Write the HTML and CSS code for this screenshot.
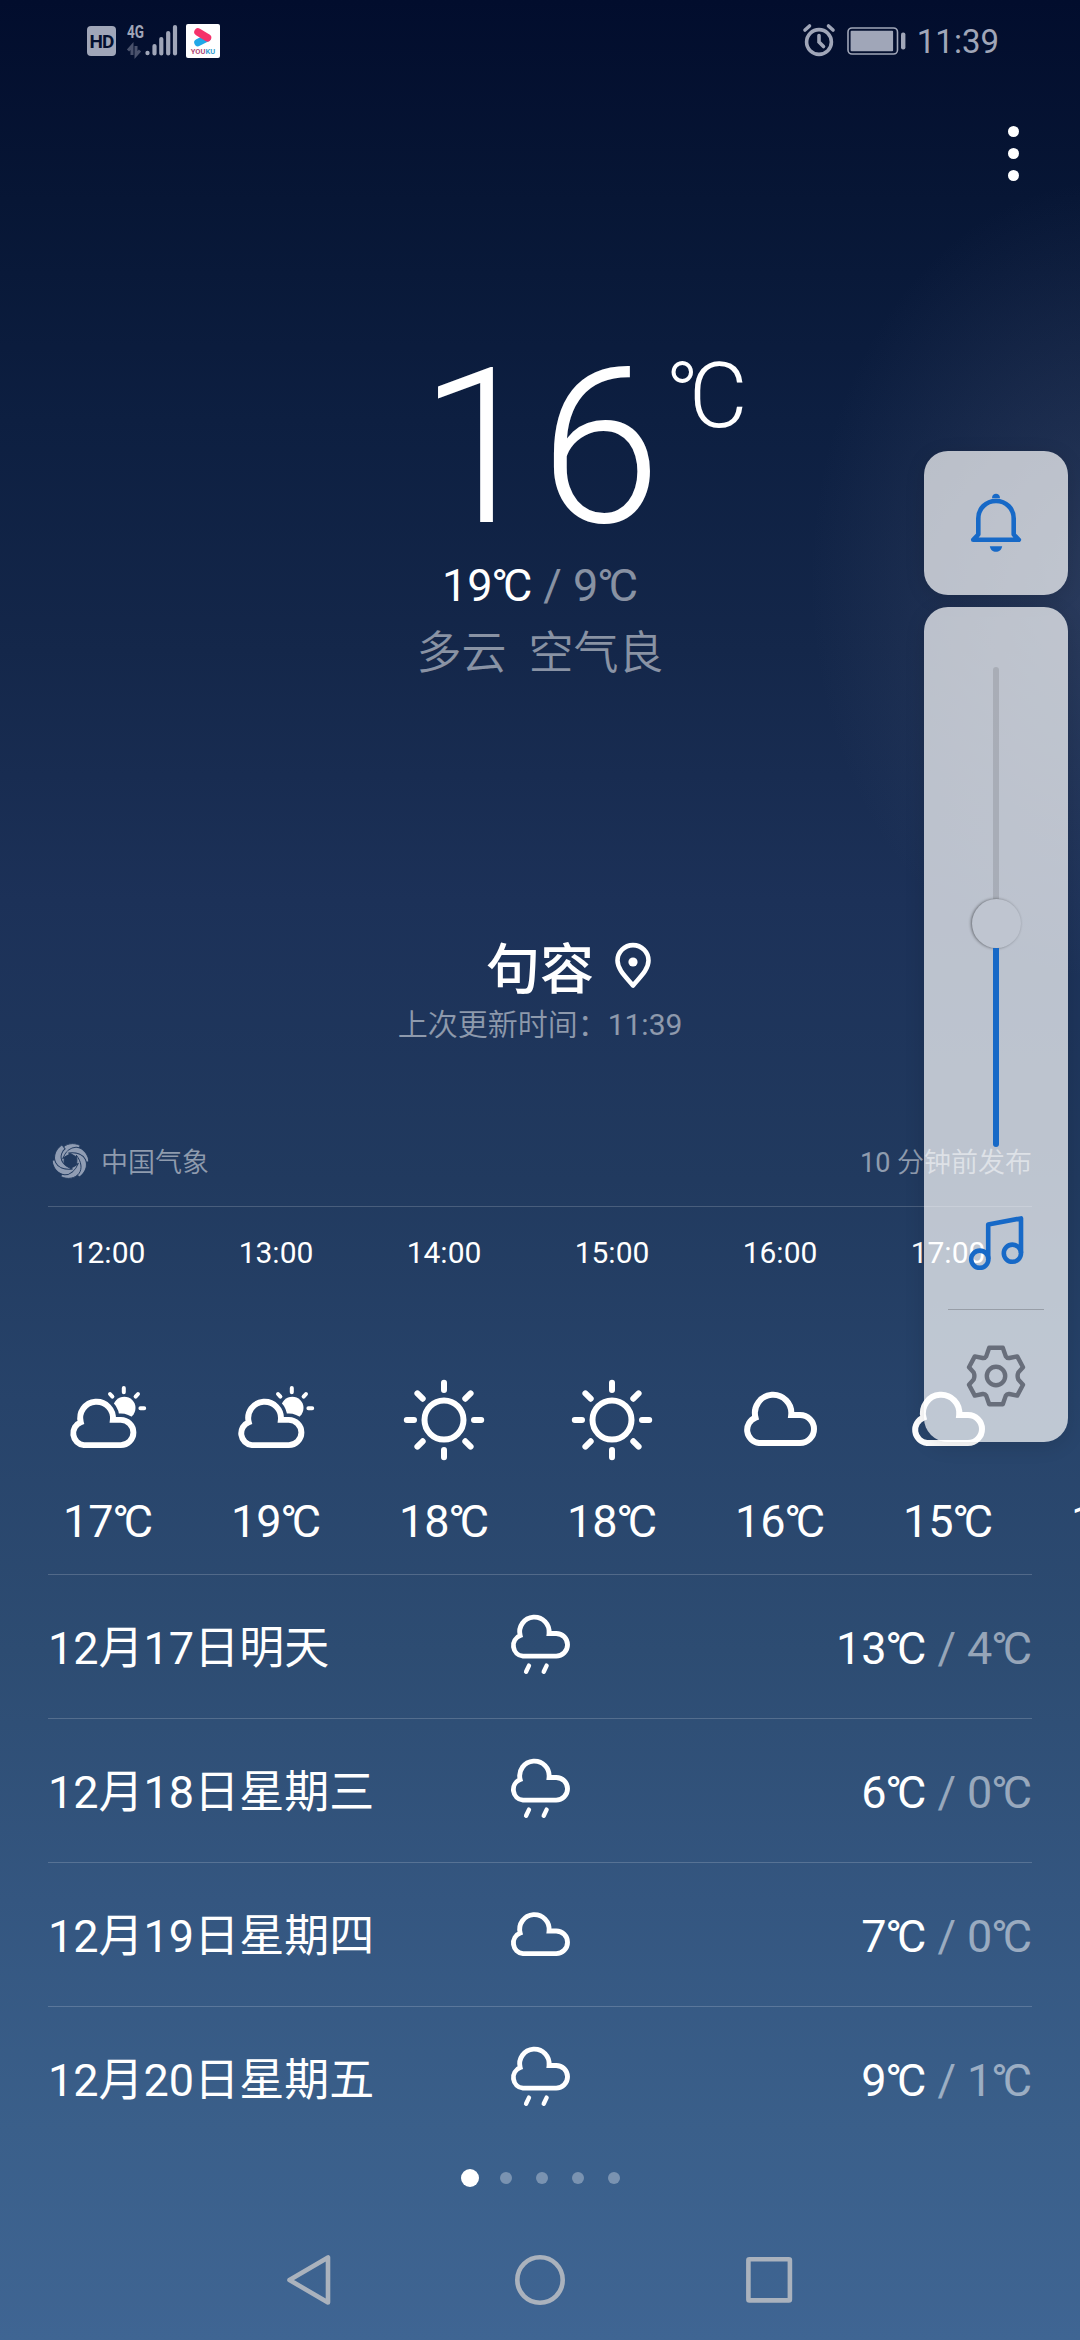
FILE: index.html
```html
<!DOCTYPE html>
<html lang="zh-CN">
<head>
<meta charset="utf-8">
<title>天气</title>
<link rel="stylesheet" href="styles.css">
</head>
<body>
<svg class="defs" aria-hidden="true">
  <defs>
    <path id="cloud-shape" d="M21 65H62A14 14 0 0 0 62 37H53.2A18.2 18.2 0 1 0 17.5 39.6A13.2 13.2 0 0 0 21 65Z"/>
    <mask id="sun-cut" maskUnits="userSpaceOnUse" x="0" y="0" width="84" height="84">
      <rect width="84" height="84" fill="#fff"/>
      <use href="#cloud-shape" transform="translate(-1 8.6) scale(.9)" fill="#000" stroke="#000" stroke-width="14"/>
    </mask>
    <symbol id="i-cloud" viewBox="0 0 84 84">
      <use href="#cloud-shape" stroke-width="6"/>
    </symbol>
    <symbol id="i-rain" viewBox="0 0 84 84">
      <use href="#cloud-shape" transform="translate(0 -11.7)" stroke-width="6"/>
      <path d="M28.4 65L24.8 72.6M50.2 65L46.6 72.6" stroke-width="5.4"/>
    </symbol>
    <symbol id="i-sun" viewBox="0 0 84 84">
      <circle cx="42" cy="42" r="19.5" stroke-width="6"/>
      <path d="M42 4.8V12M42 72V79.2M4.8 42H12M72 42H79.2M15.4 15.4L20.7 20.7M63.3 63.3L68.6 68.6M68.6 15.4L63.3 20.7M20.7 63.3L15.4 68.6" stroke-width="6"/>
    </symbol>
    <symbol id="i-partly" viewBox="0 0 84 84">
      <use href="#cloud-shape" transform="translate(-1 8.6) scale(.9)" stroke-width="6.6"/>
      <circle cx="58.3" cy="30" r="11.2" fill="#fff" stroke="none" mask="url(#sun-cut)"/>
      <path d="M57.8 10V14.2M74.4 30.3H78.2M44 16L46.4 18.6M72 16L69.6 18.6" stroke-width="4"/>
    </symbol>
  </defs>
</svg>

<div class="screen">
  <header class="status">
    <div class="status-left">
      <span class="hd">HD</span>
      <svg class="signal" width="50" height="32" viewBox="0 0 50 32">
        <text x="0" y="13.6" class="net" textLength="17" lengthAdjust="spacingAndGlyphs">4G</text>
        <path class="updown" d="M5 31V22L1 26.5M9 22v9l4-4.5"/>
        <path class="bars" d="M20.5 28.8v.4M27.5 22v7.5M34.3 15v14.5M41.2 9v20.5M48 3v26.5"/>
      </svg>
      <span class="youku">
        <svg width="18" height="19" viewBox="0 0 18 19">
          <path d="M4 14.5L13 10" stroke="#1fa8e8" stroke-width="7.5" stroke-linecap="round"/>
          <path d="M4 4L13.5 9.8" stroke="#f5326b" stroke-width="7.5" stroke-linecap="round"/>
        </svg>
        <span class="youku-name"><i>YOU</i>KU</span>
      </span>
    </div>
    <div class="status-right">
      <svg width="32" height="33" viewBox="0 0 32 33" class="line-icon alarm">
        <circle cx="16" cy="18" r="12.4"/>
        <path d="M16 11.5V18L20.5 22.5M2 6L6.5 2M30 6L25.5 2"/>
      </svg>
      <svg width="59" height="28" viewBox="0 0 59 28" class="battery">
        <rect x="1" y="1" width="49.5" height="26" rx="4" fill="none" stroke="#a0a6b8" stroke-width="1.6"/>
        <rect x="3.6" y="3.8" width="42.5" height="20.4" rx="1"/>
        <rect x="54" y="5.5" width="4.4" height="17" rx="2"/>
      </svg>
      <span class="clock">11:39</span>
    </div>
  </header>

  <div class="toolbar">
    <span class="more"><i></i><i></i><i></i></span>
  </div>

  <section class="current">
    <div class="centered big"><span class="temp">16</span><span class="unit"><b>°</b>C</span></div>
    <div class="range">19<b>°</b>C<span class="dim"> / 9<b>°</b>C</span></div>
    <div class="condition">多云&nbsp; 空气良</div>
  </section>

  <section class="place">
    <div class="centered city"><span class="name">句容</span>
      <svg class="pin" width="38" height="48" viewBox="0 0 38 48">
        <path d="M19 43.5C13 36 3.5 28 3.5 18.6A15.5 15.5 0 0 1 34.5 18.6C34.5 28 25 36 19 43.5Z" fill="none" stroke="#fff" stroke-width="4.6" stroke-linejoin="round"/>
        <circle cx="19" cy="20" r="4.6" fill="#fff"/>
      </svg>
    </div>
    <div class="updated">上次更新时间：<span class="digits">11:39</span></div>
  </section>

  <div class="source">
    <svg width="35" height="36" viewBox="-18 -18 36 36" class="swirl">
      <defs><path id="blade" d="M10 -16C3 -19.5 -5 -18 -9 -12.5C-12 -8 -11.5 -1 -6 6C-8 -3 -5 -10.5 2 -11.6C4.5 -12 7 -11.6 8 -11Z"/></defs>
      <use href="#blade"/>
      <use href="#blade" transform="rotate(60)"/>
      <use href="#blade" transform="rotate(120)"/>
      <use href="#blade" transform="rotate(180)"/>
      <use href="#blade" transform="rotate(240)"/>
      <use href="#blade" transform="rotate(300)"/>
    </svg>
    <span class="provider">中国气象</span>
    <span class="published"><span class="digits">10</span> 分钟前发布</span>
  </div>

  <section class="hourly">
    <div class="hour"><span class="time">12:00</span><svg class="wx"><use href="#i-partly"/></svg><span class="deg">17<b>°</b>C</span></div>
    <div class="hour"><span class="time">13:00</span><svg class="wx"><use href="#i-partly"/></svg><span class="deg">19<b>°</b>C</span></div>
    <div class="hour"><span class="time">14:00</span><svg class="wx"><use href="#i-sun"/></svg><span class="deg">18<b>°</b>C</span></div>
    <div class="hour"><span class="time">15:00</span><svg class="wx"><use href="#i-sun"/></svg><span class="deg">18<b>°</b>C</span></div>
    <div class="hour"><span class="time">16:00</span><svg class="wx"><use href="#i-cloud"/></svg><span class="deg">16<b>°</b>C</span></div>
    <div class="hour"><span class="time">17:00</span><svg class="wx"><use href="#i-cloud"/></svg><span class="deg">15<b>°</b>C</span></div>
    <div class="hour"><svg class="wx no-time"><use href="#i-cloud"/></svg><span class="deg">14<b>°</b>C</span></div>
  </section>

  <section class="daily">
    <div class="day"><span>12月17日明天</span><svg class="wx small"><use href="#i-rain"/></svg><span class="span">13<b>°</b>C<span class="dim"> / 4<b>°</b>C</span></span></div>
    <div class="day"><span>12月18日星期三</span><svg class="wx small"><use href="#i-rain"/></svg><span class="span">6<b>°</b>C<span class="dim"> / 0<b>°</b>C</span></span></div>
    <div class="day"><span>12月19日星期四</span><svg class="wx small"><use href="#i-cloud"/></svg><span class="span">7<b>°</b>C<span class="dim"> / 0<b>°</b>C</span></span></div>
    <div class="day"><span>12月20日星期五</span><svg class="wx small"><use href="#i-rain"/></svg><span class="span">9<b>°</b>C<span class="dim"> / 1<b>°</b>C</span></span></div>
  </section>

  <div class="pager"><i class="on"></i><i></i><i></i><i></i><i></i></div>

  <nav class="nav">
    <svg width="56" height="56" viewBox="0 0 56 56"><path d="M45 5.5V50.5L6.5 28Z"/></svg>
    <svg width="56" height="56" viewBox="0 0 56 56"><circle cx="28" cy="28" r="22.7"/></svg>
    <svg width="56" height="56" viewBox="0 0 56 56"><rect x="7.4" y="7.2" width="41.5" height="41.2" rx="1"/></svg>
  </nav>

  <aside class="volume">
    <div class="card ringer">
      <svg width="52" height="60" viewBox="0 0 52 60" class="blue">
        <path d="M8.3 41.5V25.5C8.3 15.5 16 8 26 8S43.7 15.5 43.7 25.5V41.5L48.8 46.8H3.2Z"/>
        <path d="M22 5.2C22 2 24 .8 26 .8S30 2 30 5.2ZM19.8 53.2H32.2C31.5 57 29 58.8 26 58.8S20.5 57 19.8 53.2Z" class="solid"/>
      </svg>
    </div>
    <div class="card levels">
      <div class="slider"><span class="rest"></span><span class="knob"></span><span class="fill"></span></div>
      <svg width="54" height="54" viewBox="0 0 54 54" class="blue note">
        <circle cx="10.8" cy="43.2" r="8.6"/><circle cx="43.4" cy="37.2" r="8.6"/>
        <path d="M19.2 43V8.4L52 2.4V37"/>
      </svg>
      <div class="settings">
        <svg width="60" height="62" viewBox="-30 -31 60 62" class="gear">
          <path d="M-6.8 -28.2H6.8L9.8 -19.6Q11 -17.6 13.4 -18L21.2 -19.6L27 -8.8L22.4 -3.6Q20.8 0 22.4 3.6L27 8.8L21.2 19.6L13.4 18Q11 17.6 9.8 19.6L6.8 28.2H-6.8L-9.8 19.6Q-11 17.6 -13.4 18L-21.2 19.6L-27 8.8L-22.4 3.6Q-20.8 0 -22.4 -3.6L-27 -8.8L-21.2 -19.6L-13.4 -18Q-11 -17.6 -9.8 -19.6Z"/>
          <circle r="9.2"/>
        </svg>
      </div>
    </div>
  </aside>
</div>
</body>
</html>
```

FILE: styles.css
```css
* { box-sizing: border-box; }

body {
  margin: 0;
  color: #fff;
  font-family: Roboto, "Noto Sans CJK SC", sans-serif;
}

i { font-style: normal; }
svg { display: block; flex: none; overflow: visible; }
.defs { position: absolute; width: 0; height: 0; }

.screen {
  position: relative;
  display: flex;
  flex-direction: column;
  width: 1080px;
  height: 2340px;
  overflow: hidden;
  background:
    radial-gradient(ellipse 300px 400px at 1110px 580px, rgba(110, 120, 150, .27), rgba(110, 120, 150, 0)),
    linear-gradient(180deg, #020d2d 0, #071635 200px, #0d1f41 420px, #14274a 650px, #1c3158 900px, #213a5f 1180px, #27436a 1400px, #2d4c72 1650px, #345680 1900px, #3a5f8a 2130px, #3f6593 2340px);
}

.dim { color: rgba(255, 255, 255, .5); }

/* Degree sign tucked against the C */
b { margin-left: -.03em; font-weight: inherit; letter-spacing: -.115em; }

/* Status bar */
.status {
  display: flex;
  justify-content: space-between;
  height: 83px;
  padding: 24px 81px 0 87px;
  color: #a0a6b8;
}
.status-left, .status-right { display: flex; align-items: flex-start; }
.hd {
  width: 29px;
  height: 30px;
  margin: 2px 11px 0 0;
  border-radius: 4px;
  background: #a0a6b8;
  color: #04102f;
  font: 700 19px/31px Roboto, sans-serif;
  letter-spacing: -1px;
  text-align: center;
}
.net { fill: #a0a6b8; font: 700 18px Roboto, sans-serif; }
.updown { fill: none; stroke: #4a526c; stroke-width: 3; }
.bars { fill: none; stroke: #a0a6b8; stroke-width: 4.2; stroke-linecap: round; }
.youku {
  display: flex;
  flex-direction: column;
  align-items: center;
  width: 34px;
  height: 34px;
  margin-left: 9px;
  padding-top: 4px;
  border-radius: 2px;
  background: #fff;
}
.youku-name { color: #3a9fd0; font: 700 7.5px/9px Roboto, sans-serif; }
.youku-name i { color: #b04a78; }
.line-icon { fill: none; stroke: #a0a6b8; stroke-width: 3.6; stroke-linecap: round; }
.battery { margin: 3px 0 0 12px; fill: #a0a6b8; }
.clock { margin-left: 11px; font-size: 33px; line-height: 36px; }

.toolbar { display: flex; justify-content: flex-end; align-items: center; height: 140px; padding-right: 61px; }
.more { display: flex; flex-direction: column; gap: 11px; }
.more i { width: 11px; height: 11px; border-radius: 50%; background: #fff; }

/* Current conditions */
.current, .updated { text-align: center; }
.current { padding-top: 115px; }
.centered { display: grid; grid-template-columns: 1fr auto 1fr; }
.centered > :first-child { grid-column: 2; }
.big { height: 220px; font-weight: 300; }
.temp { font-size: 218px; line-height: 220px; }
.unit { justify-self: start; margin-left: 7px; font-size: 90px; line-height: 117px; }
.range { font-size: 45px; line-height: 55px; }
.condition { margin-top: 11px; color: rgba(255, 255, 255, .5); font-size: 45px; font-weight: 350; line-height: 60px; white-space: pre; }

.place { margin-top: 257px; }
.city { height: 60px; }
.name { font-size: 54px; font-weight: 500; line-height: 60px; }
.pin { margin: 1px 0 0 20px; }
.updated { color: rgba(255, 255, 255, .5); font-size: 30px; font-weight: 350; line-height: 48px; }
.digits { font-weight: 400; }

.source {
  display: flex;
  align-items: center;
  height: 89px;
  margin: 69px 48px 0;
  padding-bottom: 3px;
  border-bottom: 1px solid rgba(255, 255, 255, .18);
  color: rgba(255, 255, 255, .5);
  font-size: 27px;
  font-weight: 350;
}
.swirl { margin: 0 13px 0 5px; fill: #909db4; stroke: #213a5f; stroke-width: 1; }
.published { margin-left: auto; }

/* Hourly forecast */
.hourly {
  display: flex;
  height: 367px;
  padding: 22px 0 0 24px;
}
.hour { display: flex; flex: none; flex-direction: column; align-items: center; width: 168px; }
.time { font-size: 30px; line-height: 48px; }
.wx { width: 84px; height: 84px; fill: none; stroke: #fff; stroke-linecap: round; }
.hour .wx { margin: 101px 0 30px; }
.hour .wx.no-time { margin-top: 149px; }
.deg { font-size: 45px; line-height: 60px; }

/* Daily forecast */
.daily { margin: 0 48px; border-top: 1px solid rgba(255, 255, 255, .18); }
.day {
  display: grid;
  grid-template-columns: 1fr auto 1fr;
  align-items: center;
  height: 144px;
  border-bottom: 1px solid rgba(255, 255, 255, .18);
  font-size: 45px;
  line-height: 60px;
}
.day:last-child { border-bottom-color: transparent; }
.day > span { padding-top: 5px; }
.day .span { text-align: right; }
.wx.small { width: 68px; height: 68px; }

.pager { display: flex; align-items: center; justify-content: center; gap: 24px; height: 54px; }
.pager i { width: 12px; height: 12px; border-radius: 50%; background: rgba(255, 255, 255, .32); }
.pager .on { width: 18px; height: 18px; margin-right: -3px; background: #fff; }

.nav { display: flex; justify-content: center; gap: 173px; padding-top: 47px; }
.nav svg { fill: none; stroke: #aab2bd; stroke-width: 4.6; stroke-linejoin: round; }

/* Volume overlay */
.volume {
  position: absolute;
  top: 451px;
  right: 12px;
  display: flex;
  flex-direction: column;
  gap: 12px;
  width: 144px;
}
.card { border-radius: 24px; background: rgba(255, 255, 255, .706); box-shadow: 0 4px 20px rgba(0, 0, 0, .12); }
.ringer { display: flex; align-items: center; justify-content: center; height: 144px; }
.levels { display: flex; flex-direction: column; align-items: center; height: 835px; padding-top: 60px; }
.blue { fill: none; stroke: #1769c7; stroke-width: 4.6; stroke-linejoin: round; }
.solid { fill: #1769c7; stroke: none; }
.slider { display: flex; flex-direction: column; align-items: center; width: 100%; height: 480px; }
.rest { width: 6px; height: 232px; border-radius: 3px 3px 0 0; background: rgba(0, 0, 0, .11); }
.knob { width: 49px; height: 49px; border-radius: 50%; background: #bfc5d0; box-shadow: -1px 0 3px rgba(0, 0, 0, .45); }
.fill { flex: 1; width: 6px; border-radius: 0 0 3px 3px; background: #1769c7; }
.note { margin-top: 69px; }
.settings {
  display: flex;
  align-items: center;
  justify-content: center;
  width: 96px;
  height: 133px;
  margin-top: 39px;
  border-top: 1px solid rgba(0, 0, 0, .2);
}
.gear { fill: none; stroke: #686e7b; stroke-width: 4.4; stroke-linejoin: round; }
```
